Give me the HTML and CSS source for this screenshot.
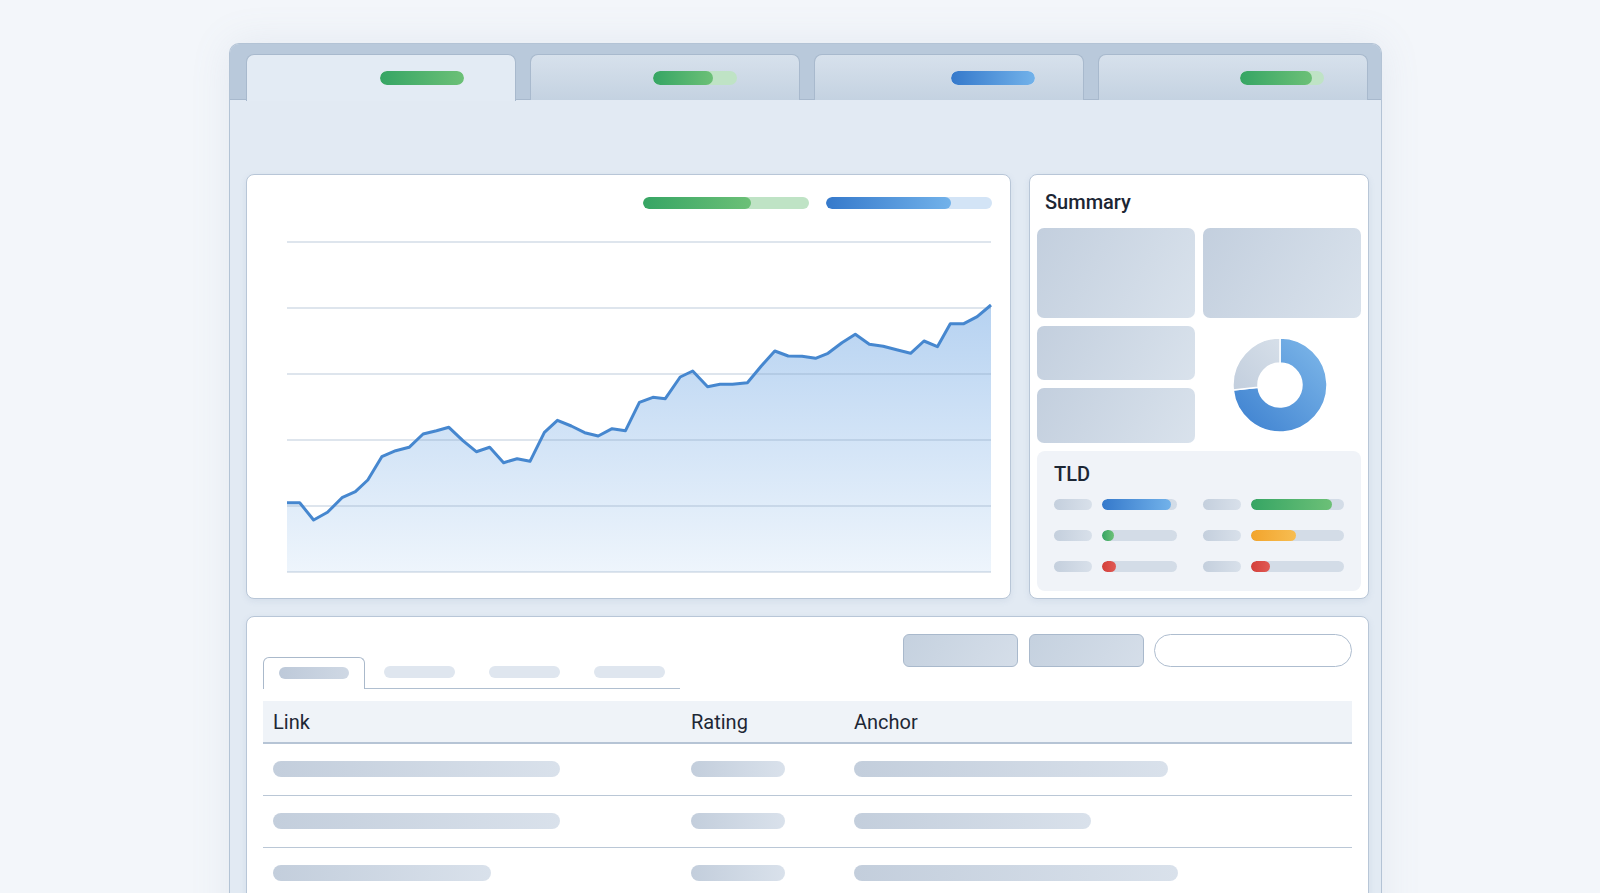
FILE: index.html
```html
<!DOCTYPE html>
<html lang="en">
<head>
    <meta charset="UTF-8">
    <meta name="viewport" content="width=device-width, initial-scale=1.0">
    <title>Backlinks Dashboard</title>
    <link rel="stylesheet" href="styles.css">
</head>
<body>
    <div class="window">
        <!-- Top tab bar -->
        <div class="tabbar">
            <div class="tab active">
                <span class="tab-pill green"><span class="fill" style="width: 100%"></span></span>
            </div>
            <div class="tab tab-2">
                <span class="tab-pill green"><span class="fill" style="width: 71%"></span></span>
            </div>
            <div class="tab tab-3">
                <span class="tab-pill blue"><span class="fill" style="width: 100%"></span></span>
            </div>
            <div class="tab tab-4">
                <span class="tab-pill green"><span class="fill" style="width: 86%"></span></span>
            </div>
        </div>

        <div class="workspace">
            <div class="panels">
                <!-- Growth chart -->
                <section class="card chart-card">
                    <div class="legend">
                        <span class="legend-bar green"><span class="fill" style="width: 65%"></span></span>
                        <span class="legend-bar blue"><span class="fill" style="width: 75%"></span></span>
                    </div>
                    <svg class="plot" width="704" height="335" viewBox="0 -2 704 335">
                        <defs>
                            <linearGradient id="area-fill" x1="0" y1="0" x2="0" y2="1">
                                <stop offset="0" stop-color="#b6d2f1"/>
                                <stop offset="1" stop-color="#eef5fc"/>
                            </linearGradient>
                        </defs>
                        <path class="area" fill="url(#area-fill)" d="M0 260.7 L12.7 260.7 L26.6 278 L40.5 270.3 L55 255.7 L68.4 249.7 L80.8 238 L94.8 214.7 L108.7 208.7 L122.1 205.3 L136.1 192 L149.5 188.7 L161.9 185.3 L175.9 198.7 L189.3 209.7 L202.7 205.3 L216.6 220.7 L230.1 216.7 L243 219.3 L257.4 190.3 L270.4 178.3 L284.3 184 L297.7 190.7 L311.2 194 L325.1 186.7 L338.5 188.7 L352.4 160.3 L365.9 155.3 L378.3 156.7 L393.2 135 L405.7 129 L420.6 144.7 L433 142.3 L445.5 142.3 L460.4 140.7 L474.3 124 L487.8 109 L501.2 114 L515.1 114.3 L528.5 116.3 L541 111.3 L554.9 100.7 L568.3 92.3 L582.3 102.3 L596.2 104.3 L609.6 107.7 L623.6 111.3 L637 99 L650.4 104.7 L663.3 81.7 L676.8 81.7 L690.2 74.7 L704 63 L704 330 L0 330 Z"/>
                        <g class="grid">
                            <line x1="0" y1="0" x2="704" y2="0"/>
                            <line x1="0" y1="66" x2="704" y2="66"/>
                            <line x1="0" y1="132" x2="704" y2="132"/>
                            <line x1="0" y1="198" x2="704" y2="198"/>
                            <line x1="0" y1="264" x2="704" y2="264"/>
                            <line x1="0" y1="330" x2="704" y2="330"/>
                        </g>
                        <polyline class="line" points="0,260.7 12.7,260.7 26.6,278 40.5,270.3 55,255.7 68.4,249.7 80.8,238 94.8,214.7 108.7,208.7 122.1,205.3 136.1,192 149.5,188.7 161.9,185.3 175.9,198.7 189.3,209.7 202.7,205.3 216.6,220.7 230.1,216.7 243,219.3 257.4,190.3 270.4,178.3 284.3,184 297.7,190.7 311.2,194 325.1,186.7 338.5,188.7 352.4,160.3 365.9,155.3 378.3,156.7 393.2,135 405.7,129 420.6,144.7 433,142.3 445.5,142.3 460.4,140.7 474.3,124 487.8,109 501.2,114 515.1,114.3 528.5,116.3 541,111.3 554.9,100.7 568.3,92.3 582.3,102.3 596.2,104.3 609.6,107.7 623.6,111.3 637,99 650.4,104.7 663.3,81.7 676.8,81.7 690.2,74.7 704,63"/>
                    </svg>
                </section>

                <!-- Summary -->
                <section class="card summary-card">
                    <h2 class="card-title">Summary</h2>
                    <div class="tiles">
                        <div class="tile"></div>
                        <div class="tile"></div>
                        <div class="tile"></div>
                        <div class="donut">
                            <svg width="100" height="100" viewBox="0 0 100 100">
                                <defs>
                                    <linearGradient id="donut-blue" x1="0" y1="1" x2="1" y2="0">
                                        <stop offset="0" stop-color="#3b7fcf"/>
                                        <stop offset="1" stop-color="#80b9ea"/>
                                    </linearGradient>
                                    <linearGradient id="donut-grey" x1="0" y1="1" x2="1" y2="0">
                                        <stop offset="0" stop-color="#c2cedd"/>
                                        <stop offset="1" stop-color="#d6dfe9"/>
                                    </linearGradient>
                                </defs>
                                <path fill="url(#donut-blue)" stroke="#fff" stroke-width="1.5" d="M50 3 A47 47 0 1 1 3.26 54.91 L28.12 52.3 A22 22 0 1 0 50 28 Z"/>
                                <path fill="url(#donut-grey)" stroke="#fff" stroke-width="1.5" d="M3.26 54.91 A47 47 0 0 1 50 3 L50 28 A22 22 0 0 0 28.12 52.3 Z"/>
                            </svg>
                        </div>
                        <div class="tile"></div>
                    </div>

                    <div class="tld">
                        <h3 class="tld-title">TLD</h3>
                        <div class="tld-grid">
                            <div class="tld-item">
                                <span class="label-pill"></span>
                                <span class="meter blue"><span class="fill" style="width: 92%"></span></span>
                            </div>
                            <div class="tld-item">
                                <span class="label-pill"></span>
                                <span class="meter green"><span class="fill" style="width: 87%"></span></span>
                            </div>
                            <div class="tld-item">
                                <span class="label-pill"></span>
                                <span class="meter green"><span class="fill" style="width: 16%"></span></span>
                            </div>
                            <div class="tld-item">
                                <span class="label-pill"></span>
                                <span class="meter orange"><span class="fill" style="width: 48%"></span></span>
                            </div>
                            <div class="tld-item">
                                <span class="label-pill"></span>
                                <span class="meter red"><span class="fill" style="width: 19%"></span></span>
                            </div>
                            <div class="tld-item">
                                <span class="label-pill"></span>
                                <span class="meter red"><span class="fill" style="width: 20%"></span></span>
                            </div>
                        </div>
                    </div>
                </section>
            </div>

            <!-- Links table -->
            <section class="card links-card">
                <div class="toolbar">
                    <div class="subtabs">
                        <div class="subtab active"><span class="subtab-pill"></span></div>
                        <div class="subtab"><span class="subtab-pill"></span></div>
                        <div class="subtab"><span class="subtab-pill"></span></div>
                        <div class="subtab"><span class="subtab-pill"></span></div>
                    </div>
                    <div class="actions">
                        <button class="action-button"></button>
                        <button class="action-button"></button>
                        <input class="search" type="text">
                    </div>
                </div>

                <table class="links-table">
                    <colgroup>
                        <col class="col-link">
                        <col class="col-rating">
                        <col>
                    </colgroup>
                    <thead>
                        <tr>
                            <th>Link</th>
                            <th>Rating</th>
                            <th>Anchor</th>
                        </tr>
                    </thead>
                    <tbody>
                        <tr>
                            <td><span class="cell-pill" style="width: 287px"></span></td>
                            <td><span class="cell-pill" style="width: 94px"></span></td>
                            <td><span class="cell-pill" style="width: 314px"></span></td>
                        </tr>
                        <tr>
                            <td><span class="cell-pill" style="width: 287px"></span></td>
                            <td><span class="cell-pill" style="width: 94px"></span></td>
                            <td><span class="cell-pill" style="width: 237px"></span></td>
                        </tr>
                        <tr>
                            <td><span class="cell-pill" style="width: 218px"></span></td>
                            <td><span class="cell-pill" style="width: 94px"></span></td>
                            <td><span class="cell-pill" style="width: 324px"></span></td>
                        </tr>
                    </tbody>
                </table>
            </section>
        </div>
    </div>
</body>
</html>
```

FILE: styles.css
```css
* {
    margin: 0;
    padding: 0;
    box-sizing: border-box;
    font-family: 'Roboto', 'Liberation Sans', sans-serif;
}

body {
    background: #f3f6fa;
    height: 893px;
    overflow: hidden;
    color: #1d2735;
}

.window {
    width: 1153px;
    height: 900px;
    margin: 43px 0 0 229px;
    background: #e2eaf3;
    border: 1px solid #b3c3d5;
    border-bottom: none;
    border-radius: 10px 10px 0 0;
    box-shadow: 0 0 40px rgba(120, 140, 170, 0.12);
    overflow: hidden;
}

/* Top tab bar */
.tabbar {
    display: flex;
    gap: 14px;
    height: 56px;
    padding: 10px 12px 0 16px;
    background: #b9c9db;
    border-bottom: 1px solid #a8b9cd;
}

.tab {
    width: 270px;
    height: 46px;
    display: flex;
    align-items: center;
    padding-left: 133px;
    background: linear-gradient(#d7e1ec, #c4d2e1);
    border: 1px solid #a8b9cd;
    border-bottom: none;
    border-radius: 8px 8px 0 0;
}

.tab.active {
    background: #e3ebf4;
    margin-bottom: -1px;
    height: 47px;
}

.tab-2 { padding-left: 122px; }
.tab-3 { padding-left: 136px; }
.tab-4 { padding-left: 141px; }

.tab-pill,
.legend-bar,
.meter {
    display: block;
    position: relative;
    overflow: hidden;
    border-radius: 999px;
}

.tab-pill {
    width: 84px;
    height: 14px;
}

.fill {
    display: block;
    height: 100%;
    border-radius: 999px;
}

.green { background: #bfe3c5; }
.green .fill { background: linear-gradient(90deg, #36a564, #6cc077); }
.blue { background: #d3e4f6; }
.blue .fill { background: linear-gradient(90deg, #3579cb, #72b2ea); }
.orange .fill { background: linear-gradient(90deg, #f2a42c, #f7bd52); }
.red .fill { background: linear-gradient(90deg, #d43f3a, #e05a55); }

/* Page body */
.workspace {
    padding: 74px 12px 0 16px;
}

.panels {
    display: grid;
    grid-template-columns: 765px 340px;
    gap: 18px;
    height: 425px;
    margin-bottom: 17px;
}

.card {
    background: #fff;
    border: 1px solid #b8c6d7;
    border-radius: 8px;
    box-shadow: 0 2px 6px rgba(110, 135, 170, 0.12);
}

/* Chart */
.chart-card {
    padding: 22px 18px 0 40px;
}

.legend {
    display: flex;
    justify-content: flex-end;
    gap: 17px;
    height: 12px;
}

.legend-bar {
    width: 166px;
    height: 12px;
}

.plot {
    display: block;
    margin-top: 31px;
    overflow: visible;
}

.grid line {
    stroke: rgba(140, 162, 190, 0.38);
    stroke-width: 1.5;
}

.line {
    fill: none;
    stroke: #4687cf;
    stroke-width: 3;
    stroke-linejoin: round;
}

/* Summary */
.summary-card {
    padding: 15px 7px 7px;
}

.card-title {
    font-size: 20px;
    font-weight: 500;
    line-height: 24px;
    margin: 0 0 14px 8px;
    color: #1c2634;
}

.tiles {
    display: grid;
    grid-template-columns: 158px 158px;
    grid-template-rows: 90px 54px 55px;
    gap: 8px;
}

.tile {
    border-radius: 7px;
    background: linear-gradient(120deg, #c3cfde, #d9e2ec);
}

.donut {
    grid-column: 2;
    grid-row: 2 / span 2;
    display: flex;
    align-items: center;
    justify-content: center;
    padding-right: 5px;
}

.tld {
    height: 140px;
    margin-top: 8px;
    padding: 11px 17px 0;
    background: #f0f3f8;
    border-radius: 8px;
}

.tld-title {
    font-size: 20px;
    font-weight: 500;
    line-height: 24px;
    color: #1c2634;
}

.tld-grid {
    display: grid;
    grid-template-columns: 123px 141px;
    grid-auto-rows: 31px;
    column-gap: 26px;
    margin-top: 3px;
}

.tld-item {
    display: flex;
    align-items: center;
    gap: 10px;
}

.label-pill {
    width: 38px;
    height: 11px;
    border-radius: 999px;
    background: linear-gradient(90deg, #c4cfdd, #d8e0ea);
}

.meter {
    flex: 1;
    height: 11px;
    background: #d3dce7;
}

/* Links table */
.links-card {
    padding: 17px 16px 0;
    height: 300px;
}

.toolbar {
    display: flex;
    justify-content: space-between;
    align-items: flex-start;
}

.subtabs {
    display: flex;
    gap: 3px;
    width: 417px;
    margin-top: 23px;
    border-bottom: 1px solid #b0bfd0;
}

.subtab {
    width: 102px;
    height: 31px;
    display: flex;
    align-items: center;
    justify-content: center;
}

.subtab.active {
    height: 32px;
    margin-bottom: -1px;
    background: #fff;
    border: 1px solid #aab9cb;
    border-bottom: none;
    border-radius: 6px 6px 0 0;
}

.subtab-pill {
    width: 71px;
    height: 12px;
    margin-bottom: 2px;
    border-radius: 999px;
    background: #dfe6ef;
}

.subtab.active .subtab-pill {
    width: 70px;
    background: linear-gradient(90deg, #bdc9d9, #cfd8e4);
}

.actions {
    display: flex;
    gap: 11px;
}

.action-button {
    width: 115px;
    height: 33px;
    border: 1px solid #a9b9cc;
    border-radius: 6px;
    background: linear-gradient(120deg, #c5d1df, #d5dee9);
}

.search {
    width: 198px;
    height: 33px;
    margin-left: -1px;
    border: 1px solid #aebdcf;
    border-radius: 17px;
    background: #fff;
}

.links-table {
    width: 1089px;
    margin-top: 12px;
    border-collapse: collapse;
    table-layout: fixed;
}

.col-link { width: 418px; }
.col-rating { width: 163px; }

.links-table th {
    height: 42px;
    padding-left: 10px;
    text-align: left;
    font-size: 20px;
    font-weight: 400;
    color: #1d2735;
    background: #eff3f8;
    border-bottom: 2px solid #b6c4d5;
}

.links-table td {
    height: 52px;
    padding-left: 10px;
    border-bottom: 1px solid #bac7d6;
}

.cell-pill {
    display: block;
    height: 16px;
    border-radius: 999px;
    background: linear-gradient(90deg, #c3cedc, #d9e1eb);
}
```
